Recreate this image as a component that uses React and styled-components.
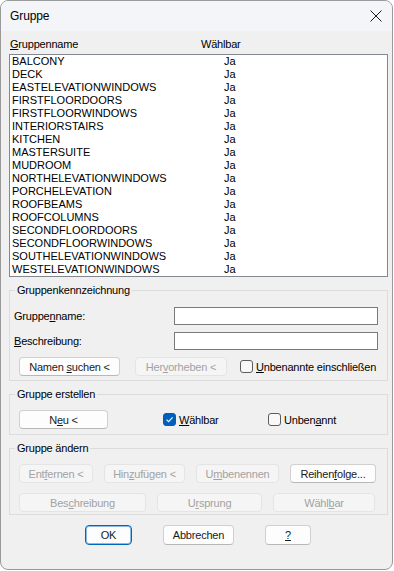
import React from 'react';
import styled, { createGlobalStyle } from 'styled-components';

const Global = createGlobalStyle`
  html, body {
    margin: 0;
    padding: 0;
    background: #ffffff;
  }
  body {
    font-family: "Liberation Sans", Arial, sans-serif;
    font-size: 11px;
    color: #000;
  }
`

const Window = styled.div`
  width: 393px;
  height: 570px;
  box-sizing: border-box;
  border: 1px solid #9a9a9a;
  border-radius: 8px;
  overflow: hidden;
  background: #f0f0f0;
  display: flex;
  flex-direction: column;
`

const TitleBar = styled.div`
  height: 30px;
  flex: none;
  background: #f3f5f8;
  display: flex;
  align-items: center;
  justify-content: space-between;
  padding: 0 6px 0 9px;
`

const Title = styled.span`
  font-size: 12px;
  letter-spacing: -0.1px;
`

const CloseButton = styled.div`
  width: 20px;
  height: 20px;
  display: flex;
  align-items: center;
  justify-content: center;
`

const Body = styled.div`
  flex: 1;
  display: flex;
  flex-direction: column;
  padding: 0 4px 0 8px;
`

const ListHeader = styled.div`
  height: 17px;
  margin-top: 4px;
  padding-left: 1px;
  display: flex;
  align-items: center;
  letter-spacing: -0.2px;
`

const HeaderCell = styled.span`
  width: ${p => p.$w || 'auto'};
`

const ListBox = styled.div`
  height: 223px;
  box-sizing: border-box;
  margin-top: 2px;
  border: 1px solid #828790;
  background: #ffffff;
  padding: 0 2px;
`

const Row = styled.div`
  height: 13px;
  line-height: 13px;
  display: flex;
`

const NameCell = styled.span`
  width: 212px;
`

const GroupBox = styled.div`
  position: relative;
  margin-top: 13px;
  border: 1px solid #dcdcdc;
  padding: ${p => p.$pad};
  display: flex;
  flex-direction: column;
  gap: ${p => p.$gap || '0px'};
`

const Legend = styled.span`
  position: absolute;
  top: -8px;
  left: 5px;
  padding: 0 2px;
  line-height: 14px;
  background: #f0f0f0;
  letter-spacing: -0.2px;
`

const FieldRow = styled.div`
  height: 18px;
  display: flex;
  align-items: center;
  padding: 0 9px 0 4px;
`

const Label = styled.span`
  letter-spacing: -0.2px;
`

const Input = styled.div`
  margin-left: auto;
  width: 204px;
  height: 18px;
  box-sizing: border-box;
  border: 1px solid #7a7a7a;
  background: #ffffff;
`

const ButtonRow = styled.div`
  display: flex;
  align-items: center;
  gap: ${p => p.$gap || '11px'};
  padding-left: ${p => p.$left || '9px'};
`

const Button = styled.div`
  width: ${p => p.$w}px;
  height: ${p => p.$h || 19}px;
  box-sizing: border-box;
  flex: none;
  border-radius: 4px;
  display: flex;
  align-items: center;
  justify-content: center;
  letter-spacing: -0.2px;
  white-space: pre;
  background: ${p => (p.$disabled ? '#f5f5f5' : '#fdfdfd')};
  color: ${p => (p.$disabled ? '#a2a2a2' : '#1a1a1a')};
  border: 1px solid ${p => (p.$default ? '#0067c0' : p.$disabled ? '#e4e4e4' : '#d0d0d0')};
  border-bottom-color: ${p => (p.$default ? '#0067c0' : p.$disabled ? '#e4e4e4' : '#b8b8b8')};
  box-shadow: ${p => (p.$default ? 'inset 0 0 0 1px rgba(0,103,192,0.45)' : 'none')};
`

const CheckField = styled.div`
  display: flex;
  align-items: center;
  gap: 3px;
  width: ${p => p.$w || 'auto'};
  margin-left: ${p => p.$ml || '0px'};
  letter-spacing: -0.2px;
`

const Box = styled.span`
  width: 13px;
  height: 13px;
  box-sizing: border-box;
  border-radius: 3px;
  border: 1px solid ${p => (p.$checked ? '#005fb8' : '#5c5c5c')};
  background: ${p => (p.$checked ? '#005fb8' : '#f8f8f8')};
  display: flex;
  align-items: center;
  justify-content: center;
`

const CreateRow = styled.div`
  display: flex;
  align-items: center;
  padding-left: 9px;
`

const Footer = styled.div`
  margin-top: 10px;
  display: flex;
  padding-left: 76px;
  gap: 31px;
`

const groups = [
  'BALCONY', 'DECK', 'EASTELEVATIONWINDOWS', 'FIRSTFLOORDOORS', 'FIRSTFLOORWINDOWS',
  'INTERIORSTAIRS', 'KITCHEN', 'MASTERSUITE', 'MUDROOM', 'NORTHELEVATIONWINDOWS',
  'PORCHELEVATION', 'ROOFBEAMS', 'ROOFCOLUMNS', 'SECONDFLOORDOORS', 'SECONDFLOORWINDOWS',
  'SOUTHELEVATIONWINDOWS', 'WESTELEVATIONWINDOWS',
];

// text with one underlined access key
const K = ({ t, k }) => {
  const i = t.indexOf(k);
  return (
    <span>
      {t.slice(0, i)}<u>{k}</u>{t.slice(i + 1)}
    </span>
  );
};

const Check = ({ checked }) => (
  <Box $checked={checked}>
    {checked && (
      <svg width="9" height="9" viewBox="0 0 9 9">
        <path d="M1.5 4.6 L3.6 6.6 L7.6 2.4" fill="none" stroke="#fff" strokeWidth="1.1" />
      </svg>
    )}
  </Box>
);

export default function App() {
  return (
    <>
      <Global />
      <Window>
        <TitleBar>
          <Title>Gruppe</Title>
          <CloseButton>
            <svg width="12" height="12" viewBox="0 0 12 12">
              <path d="M0.5 0.5 L11.5 11.5 M11.5 0.5 L0.5 11.5" stroke="#1a1a1a" strokeWidth="1" />
            </svg>
          </CloseButton>
        </TitleBar>
        <Body>
          <ListHeader>
            <HeaderCell $w="191px"><K t="Gruppenname" k="G" /></HeaderCell>
            <HeaderCell>Wählbar</HeaderCell>
          </ListHeader>
          <ListBox>
            {groups.map(g => (
              <Row key={g}>
                <NameCell>{g}</NameCell>
                <span>Ja</span>
              </Row>
            ))}
          </ListBox>

          <GroupBox $pad="16px 0 4px" $gap="7px">
            <Legend>Gruppenkennzeichnung</Legend>
            <FieldRow>
              <Label>Gruppe<u>n</u>name:</Label>
              <Input />
            </FieldRow>
            <FieldRow>
              <Label><K t="Beschreibung:" k="B" /></Label>
              <Input />
            </FieldRow>
            <ButtonRow $gap="15px">
              <Button $w={101}><K t="Namen suchen <" k="s" /></Button>
              <Button $w={92} $disabled><K t="Hervorheben <" k="v" /></Button>
              <CheckField $ml="-2px">
                <Check />
                <K t="Unbenannte einschließen" k="U" />
              </CheckField>
            </ButtonRow>
          </GroupBox>

          <GroupBox $pad="15px 0 5px">
            <Legend>Gruppe erstellen</Legend>
            <CreateRow>
              <Button $w={89}><K t="Neu <" k="e" /></Button>
              <CheckField $ml="55px" $w="105px">
                <Check checked />
                <K t="Wählbar" k="W" />
              </CheckField>
              <CheckField>
                <Check />
                <span>Unben<u>a</u>nnt</span>
              </CheckField>
            </CreateRow>
          </GroupBox>

          <GroupBox $pad="15px 0 2px" $gap="10px">
            <Legend>Gruppe ändern</Legend>
            <ButtonRow>
              <Button $w={74} $disabled><K t="Entfernen <" k="f" /></Button>
              <Button $w={81} $disabled><K t="Hinzufügen <" k="z" /></Button>
              <Button $w={83} $disabled><K t="Umbenennen" k="m" /></Button>
              <Button $w={86}><span>Reihen<u>f</u>olge...</span></Button>
            </ButtonRow>
            <ButtonRow>
              <Button $w={127} $disabled><K t="Beschreibung" k="c" /></Button>
              <Button $w={105} $disabled><K t="Ursprung" k="r" /></Button>
              <Button $w={102} $disabled><span>Wähl<u>b</u>ar</span></Button>
            </ButtonRow>
          </GroupBox>

          <Footer>
            <Button $w={47} $h={20} $default>OK</Button>
            <Button $w={71} $h={20}>Abbrechen</Button>
            <Button $w={46} $h={20}><u>?</u></Button>
          </Footer>
        </Body>
      </Window>
    </>
  );
}
